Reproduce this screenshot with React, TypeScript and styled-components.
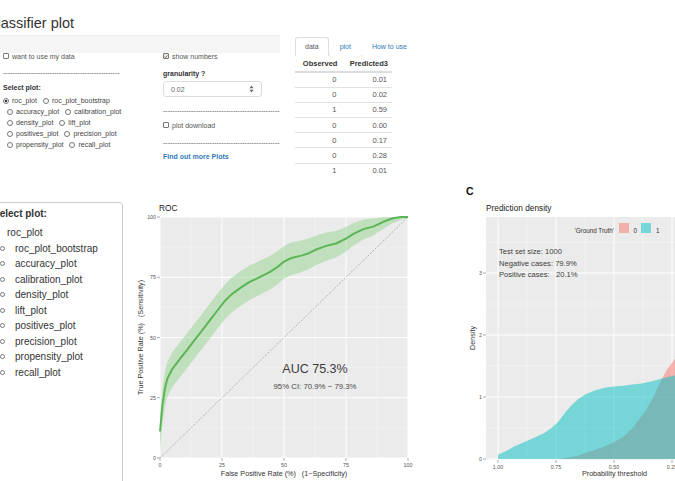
import React from "react";
import styled, { createGlobalStyle } from "styled-components";

const GlobalStyle = createGlobalStyle`
  html, body {
    margin: 0;
    padding: 0;
    background: #fff;
  }
  body {
    width: 675px;
    height: 481px;
    overflow: hidden;
    font-family: "Liberation Sans", Arial, Helvetica, sans-serif;
    color: #333;
  }
`;

// ---------- data ----------
const PLOT_OPTIONS = [
  ["roc_plot", "roc_plot_bootstrap"],
  ["accuracy_plot", "calibration_plot"],
  ["density_plot", "lift_plot"],
  ["positives_plot", "precision_plot"],
  ["propensity_plot", "recall_plot"],
];

const BIG_OPTIONS = [
  "roc_plot_bootstrap",
  "accuracy_plot",
  "calibration_plot",
  "density_plot",
  "lift_plot",
  "positives_plot",
  "precision_plot",
  "propensity_plot",
  "recall_plot",
];

const TABLE_ROWS: [string, string][] = [
  ["0", "0.01"],
  ["0", "0.02"],
  ["1", "0.59"],
  ["0", "0.00"],
  ["0", "0.17"],
  ["0", "0.28"],
  ["1", "0.01"],
];

const DASHES = "-".repeat(50);

const ROC_POINTS: [number, number][] = [
  [0, 11], [1, 22], [2, 29], [3, 33], [5, 37], [8, 41], [11, 45], [14, 49],
  [17, 53], [20, 57], [23, 61], [26, 65], [29, 68], [33, 71], [36, 73],
  [40, 75], [44, 77], [47, 79], [50, 81.5], [53, 83], [57, 84], [60, 85],
  [63, 86.5], [67, 88], [71, 89], [75, 91], [78, 93], [82, 95], [86, 96],
  [90, 98], [94, 99.5], [97, 100], [100, 100],
];

const TEAL_DENSITY: [number, number][] = [
  [1.0, 0.07], [0.97, 0.12], [0.93, 0.2], [0.88, 0.28], [0.84, 0.35],
  [0.8, 0.42], [0.77, 0.5], [0.74, 0.6], [0.71, 0.75], [0.68, 0.88],
  [0.65, 0.98], [0.62, 1.05], [0.58, 1.11], [0.54, 1.15], [0.5, 1.17],
  [0.46, 1.18], [0.42, 1.2], [0.38, 1.22], [0.34, 1.25], [0.3, 1.29],
  [0.26, 1.33], [0.22, 1.36],
];

const PINK_DENSITY: [number, number][] = [
  [0.74, 0], [0.7, 0.02], [0.66, 0.05], [0.62, 0.1], [0.58, 0.15],
  [0.54, 0.2], [0.5, 0.27], [0.46, 0.36], [0.42, 0.5], [0.39, 0.65],
  [0.36, 0.8], [0.33, 1.0], [0.3, 1.25], [0.27, 1.45], [0.24, 1.6],
  [0.22, 1.7],
];

// ---------- small widgets ----------
const CheckBox = ({ checked }: { checked?: boolean }) => (
  <Box $checked={checked}>
    {checked && (
      <svg width="5" height="5" viewBox="0 0 10 10">
        <path d="M1.5 5.2 L4 7.8 L8.8 2" fill="none" stroke="#555" strokeWidth="1.8" />
      </svg>
    )}
  </Box>
);

const Spinner = () => (
  <svg width="5" height="8" viewBox="0 0 5 8">
    <path d="M2.5 0.5 L4.5 3.2 L0.5 3.2 Z" fill="#666" />
    <path d="M2.5 7.5 L4.5 4.8 L0.5 4.8 Z" fill="#666" />
  </svg>
);

// ---------- charts ----------
const RocChart = () => {
  const L = 32;
  const T = 32;
  const W = 248;
  const H = 241;
  const sx = (v: number) => L + (v * W) / 100;
  const sy = (v: number) => T + H - (v * H) / 100;
  const spread = (f: number) => 6.5 * (1 - Math.pow(f / 100, 4)) + 0.4;

  const line = ROC_POINTS.map(
    ([f, t], i) => `${i ? "L" : "M"}${sx(f).toFixed(1)},${sy(t).toFixed(1)}`
  ).join(" ");
  const upper = ROC_POINTS.map(([f, t]) => `${sx(f).toFixed(1)},${sy(Math.min(100, t + spread(f))).toFixed(1)}`);
  const lower = [...ROC_POINTS]
    .reverse()
    .map(([f, t]) => `${sx(f).toFixed(1)},${sy(Math.max(0, t - spread(f) * 1.1)).toFixed(1)}`);
  const band = `M${upper.join(" L")} L${lower.join(" L")} Z`;

  const majors = [0, 25, 50, 75, 100];
  const minors = [12.5, 37.5, 62.5, 87.5];

  return (
    <ChartSvg width="292" height="296" viewBox="0 0 292 296">
      <PlotTitle x="31" y="26">ROC</PlotTitle>
      <rect x={L} y={T} width={W} height={H} fill="#ebebeb" />
      {minors.map((m) => (
        <g key={m}>
          <line x1={sx(m)} x2={sx(m)} y1={T} y2={T + H} stroke="#f4f4f4" strokeWidth="0.5" />
          <line x1={L} x2={L + W} y1={sy(m)} y2={sy(m)} stroke="#f4f4f4" strokeWidth="0.5" />
        </g>
      ))}
      {majors.map((m) => (
        <g key={m}>
          <line x1={sx(m)} x2={sx(m)} y1={T} y2={T + H} stroke="#fff" strokeWidth="1" />
          <line x1={L} x2={L + W} y1={sy(m)} y2={sy(m)} stroke="#fff" strokeWidth="1" />
          <line x1={L - 3} x2={L} y1={sy(m)} y2={sy(m)} stroke="#555" strokeWidth="0.5" />
          <line x1={sx(m)} x2={sx(m)} y1={T + H} y2={T + H + 3} stroke="#555" strokeWidth="0.5" />
          <TickLabel x={L - 4} y={sy(m) + 2} textAnchor="end">{m}</TickLabel>
          <TickLabel x={sx(m)} y={T + H + 8.5} textAnchor="middle">{m}</TickLabel>
        </g>
      ))}
      <path d={band} fill="#86d07f" fillOpacity="0.42" strokeLinejoin="round" />
      <line x1={L} y1={T + H} x2={L + W} y2={T} stroke="#444" strokeWidth="0.6" strokeDasharray="0.8 1.6" />
      <path d={line} fill="none" stroke="#5cb556" strokeWidth="2" strokeLinejoin="round" />
      <AucText x="187" y="188" textAnchor="middle">AUC 75.3%</AucText>
      <CiText x="187" y="204" textAnchor="middle">95% CI: 70.9% − 79.3%</CiText>
      <AxisTitle x={L + W / 2} y="291" textAnchor="middle">
        False Positive Rate (%)   (1−Specificity)
      </AxisTitle>
      <AxisTitle
        x="0"
        y="0"
        textAnchor="middle"
        transform={`translate(15 ${T + H / 2}) rotate(-90)`}
      >
        True Positive Rate (%)   (Sensitivity)
      </AxisTitle>
    </ChartSvg>
  );
};

const DensityChart = () => {
  const L = 46;
  const T = 32;
  const B = 274;
  const sx = (p: number) => 58 + (1 - p) * 232;
  const sy = (d: number) => B - d * 62;
  const area = (pts: [number, number][]) =>
    `M${sx(pts[0][0]).toFixed(1)},${B} ` +
    pts.map(([p, d]) => `L${sx(p).toFixed(1)},${sy(d).toFixed(1)}`).join(" ") +
    ` L${sx(pts[pts.length - 1][0]).toFixed(1)},${B} Z`;

  const xMajor: [number, string][] = [[1, "1.00"], [0.75, "0.75"], [0.5, "0.50"], [0.25, "0.25"]];
  const xMinor = [0.875, 0.625, 0.375];
  const yMajor = [0, 1, 2, 3];
  const yMinor = [0.5, 1.5, 2.5, 3.5];

  return (
    <ChartSvg width="235" height="296" viewBox="0 0 235 296">
      <FigureLetter x="26" y="9.5">C</FigureLetter>
      <PlotTitle x="46" y="26">Prediction density</PlotTitle>
      <rect x={L} y={T} width={235 - L} height={B - T + 1} fill="#ebebeb" />
      {xMinor.map((p) => (
        <line key={p} x1={sx(p)} x2={sx(p)} y1={T} y2={B + 1} stroke="#f4f4f4" strokeWidth="0.5" />
      ))}
      {yMinor.map((d) => (
        <line key={d} x1={L} x2={235} y1={sy(d)} y2={sy(d)} stroke="#f4f4f4" strokeWidth="0.5" />
      ))}
      {xMajor.map(([p, label]) => (
        <g key={label}>
          <line x1={sx(p)} x2={sx(p)} y1={T} y2={B + 1} stroke="#fff" strokeWidth="1" />
          <line x1={sx(p)} x2={sx(p)} y1={B + 1} y2={B + 4} stroke="#555" strokeWidth="0.5" />
          <TickLabel x={sx(p)} y={B + 9.5} textAnchor="middle">{label}</TickLabel>
        </g>
      ))}
      {yMajor.map((d) => (
        <g key={d}>
          <line x1={L} x2={235} y1={sy(d)} y2={sy(d)} stroke="#fff" strokeWidth="1" />
          <line x1={L - 3} x2={L} y1={sy(d)} y2={sy(d)} stroke="#555" strokeWidth="0.5" />
          <TickLabel x={L - 4} y={sy(d) + 2} textAnchor="end">{d}</TickLabel>
        </g>
      ))}
      <path d={area(PINK_DENSITY)} fill="#f8766d" fillOpacity="0.5" />
      <path d={area(TEAL_DENSITY)} fill="#00bfc4" fillOpacity="0.5" />

      <LegendText x="174" y="48" textAnchor="end">'Ground Truth'</LegendText>
      <rect x="179" y="38" width="10" height="10" fill="#f8766d" fillOpacity="0.5" />
      <LegendText x="193.5" y="48">0</LegendText>
      <rect x="201" y="38" width="10" height="10" fill="#00bfc4" fillOpacity="0.5" />
      <LegendText x="216" y="48">1</LegendText>

      <NoteText x="59" y="69">Test set size: 1000</NoteText>
      <NoteText x="59" y="80.5">Negative cases: 79.9%</NoteText>
      <NoteText x="59" y="92">Positive cases:   20.1%</NoteText>

      <AxisTitle x="174.5" y="291" textAnchor="middle">Probability threshold</AxisTitle>
      <AxisTitle x="0" y="0" textAnchor="middle" transform={`translate(35 153) rotate(-90)`}>
        Density
      </AxisTitle>
    </ChartSvg>
  );
};

// ---------- page ----------
const App = () => {
  return (
    <Page>
      <GlobalStyle />
      <TopSection>
        <ShinyPane>
          <Title>Classifier plot</Title>
          <Well />
          <Columns>
            <Column>
              <CheckRow>
                <CheckBox />
                want to use my data
              </CheckRow>
              <Dashes $top={9}>{DASHES}</Dashes>
              <FieldLabel $top={7}>Select plot:</FieldLabel>
              <RadioList>
                {PLOT_OPTIONS.map((row, i) => (
                  <RadioRow key={i} $indent={i === 0 ? 0 : 4}>
                    {row.map((name, j) => (
                      <RadioItem key={name}>
                        <Radio $checked={i === 0 && j === 0} />
                        {name}
                      </RadioItem>
                    ))}
                  </RadioRow>
                ))}
              </RadioList>
            </Column>
            <Column>
              <CheckRow>
                <CheckBox checked />
                show numbers
              </CheckRow>
              <FieldLabel $top={10}>granularity ?</FieldLabel>
              <NumberInput>
                0.02
                <Spinner />
              </NumberInput>
              <Dashes $top={10}>{DASHES}</Dashes>
              <CheckRow $top={6}>
                <CheckBox />
                plot download
              </CheckRow>
              <Dashes $top={10}>{DASHES}</Dashes>
              <MoreLink $top={6}>Find out more Plots</MoreLink>
            </Column>
          </Columns>
        </ShinyPane>

        <TablePane>
          <Tabs>
            <Tab $active>data</Tab>
            <Tab>plot</Tab>
            <Tab>How to use</Tab>
          </Tabs>
          <DataTable>
            <thead>
              <tr>
                <HeadCell>Observed</HeadCell>
                <HeadCell>Predicted3</HeadCell>
              </tr>
            </thead>
            <tbody>
              {TABLE_ROWS.map(([obs, pred], i) => (
                <tr key={i}>
                  <Cell>{obs}</Cell>
                  <Cell>{pred}</Cell>
                </tr>
              ))}
            </tbody>
          </DataTable>
        </TablePane>
      </TopSection>

      <BottomSection>
        <SelectPanel>
          <PanelHeading>Select plot:</PanelHeading>
          <OptionRow $plain>roc_plot</OptionRow>
          {BIG_OPTIONS.map((name) => (
            <OptionRow key={name}>
              <BigRadio />
              {name}
            </OptionRow>
          ))}
        </SelectPanel>
        <RocWrap>
          <RocChart />
        </RocWrap>
        <DensityWrap>
          <DensityChart />
        </DensityWrap>
      </BottomSection>
    </Page>
  );
};

const Page = styled.div`
  width: 675px;
  height: 481px;
  overflow: hidden;
  display: flex;
  flex-direction: column;
`;

const TopSection = styled.section`
  display: flex;
  height: 185px;
  flex-shrink: 0;
`;

const ShinyPane = styled.div`
  width: 295px;
  display: flex;
  flex-direction: column;
`;

const Title = styled.h2`
  margin: 0 0 4px -13px;
  padding-top: 15px;
  font-size: 14.5px;
  font-weight: 400;
  line-height: 16px;
  color: #333;
  white-space: nowrap;
`;

const Well = styled.div`
  width: 280px;
  height: 17px;
  background: #f5f5f5;
  border-top: 1px solid #ececec;
`;

const Columns = styled.div`
  display: grid;
  grid-template-columns: 160px 132px;
  padding-left: 3px;
`;

const Column = styled.div`
  display: flex;
  flex-direction: column;
`;

const CheckRow = styled.label<{ $top?: number }>`
  display: flex;
  align-items: center;
  gap: 3px;
  height: 8px;
  margin-top: ${(p) => (p.$top ?? -1)}px;
  font-size: 7px;
  color: #555;
  white-space: nowrap;
`;

const Box = styled.span<{ $checked?: boolean }>`
  box-sizing: border-box;
  width: 6px;
  height: 6px;
  border: 1px solid #777;
  border-radius: 1px;
  background: ${(p) => (p.$checked ? "#eaeaea" : "#fff")};
  display: inline-flex;
  align-items: center;
  justify-content: center;
  flex-shrink: 0;
`;

const Dashes = styled.div<{ $top: number }>`
  height: 8px;
  margin-top: ${(p) => p.$top}px;
  white-space: nowrap;
  font-size: 7px;
  line-height: 8px;
  color: #555;
`;

const FieldLabel = styled.div<{ $top: number }>`
  height: 8px;
  margin-top: ${(p) => p.$top}px;
  font-size: 7px;
  line-height: 8px;
  font-weight: 700;
  color: #333;
`;

const RadioList = styled.div`
  margin-top: 3px;
  display: flex;
  flex-direction: column;
`;

const RadioRow = styled.div<{ $indent: number }>`
  display: flex;
  align-items: center;
  height: 11px;
  padding-left: ${(p) => p.$indent}px;
  font-size: 7px;
  color: #444;
  white-space: nowrap;
`;

const RadioItem = styled.label`
  display: flex;
  align-items: center;
  gap: 3px;
  margin-right: 6px;
`;

const Radio = styled.span<{ $checked?: boolean }>`
  box-sizing: border-box;
  width: 6px;
  height: 6px;
  border-radius: 50%;
  border: 1px solid #777;
  background: ${(p) => (p.$checked ? "radial-gradient(circle, #333 0 1.3px, #fff 1.6px)" : "#fff")};
  flex-shrink: 0;
`;

const NumberInput = styled.div`
  box-sizing: border-box;
  width: 99px;
  height: 16px;
  margin-top: 3px;
  padding: 0 7px;
  display: flex;
  align-items: center;
  justify-content: space-between;
  border: 1px solid #ddd;
  border-radius: 3px;
  font-size: 7px;
  color: #666;
`;

const MoreLink = styled.a<{ $top: number }>`
  display: block;
  height: 8px;
  margin-top: ${(p) => p.$top}px;
  font-size: 7px;
  line-height: 8px;
  font-weight: 700;
  color: #337ab7;
  white-space: nowrap;
`;

const TablePane = styled.div`
  display: flex;
  flex-direction: column;
  padding-top: 37px;
`;

const Tabs = styled.div`
  display: flex;
  width: 117px;
  height: 19px;
  box-sizing: border-box;
  border-bottom: 1px solid #ddd;
`;

const Tab = styled.div<{ $active?: boolean }>`
  box-sizing: border-box;
  height: 19px;
  padding: 0 9px;
  margin-right: 1px;
  display: flex;
  align-items: center;
  font-size: 7px;
  white-space: nowrap;
  color: ${(p) => (p.$active ? "#555" : "#337ab7")};
  background: #fff;
  border: 1px solid ${(p) => (p.$active ? "#ddd" : "transparent")};
  border-bottom-color: ${(p) => (p.$active ? "#fff" : "transparent")};
  border-radius: 3px 3px 0 0;
`;

const DataTable = styled.table`
  width: 97px;
  border-collapse: collapse;
  font-size: 7.5px;
`;

const HeadCell = styled.th`
  height: 15px;
  padding: 0 4px;
  text-align: right;
  font-weight: 700;
  color: #333;
  border-bottom: 2px solid #ddd;
  white-space: nowrap;
`;

const Cell = styled.td`
  box-sizing: border-box;
  height: 15.2px;
  padding: 0 5px;
  text-align: right;
  color: #555;
  border-top: 1px solid #e2e2e2;
`;

const BottomSection = styled.section`
  display: flex;
  height: 296px;
  flex-shrink: 0;
`;

const SelectPanel = styled.div`
  box-sizing: border-box;
  width: 137px;
  height: 300px;
  margin: 17px 0 0 -14px;
  padding: 5px 0 0 6px;
  border: 1px solid #ccc;
  border-radius: 4px;
  flex-shrink: 0;
  font-size: 10px;
  color: #333;
`;

const PanelHeading = styled.div`
  height: 12px;
  line-height: 12px;
  font-weight: 700;
  margin-bottom: 5px;
  white-space: nowrap;
`;

const OptionRow = styled.label<{ $plain?: boolean }>`
  display: flex;
  align-items: center;
  gap: 10px;
  height: 15.5px;
  padding-left: ${(p) => (p.$plain ? 14 : 7)}px;
  white-space: nowrap;
`;

const BigRadio = styled.span`
  box-sizing: border-box;
  width: 5px;
  height: 5px;
  border-radius: 50%;
  border: 1px solid #777;
  flex-shrink: 0;
`;

const RocWrap = styled.div`
  margin-left: 5px;
  flex-shrink: 0;
`;

const DensityWrap = styled.div`
  margin-left: 20px;
  flex-shrink: 0;
`;

const ChartSvg = styled.svg`
  display: block;
  font-family: "Liberation Sans", Arial, sans-serif;
`;

const PlotTitle = styled.text`
  font-size: 8.3px;
  fill: #222;
`;

const FigureLetter = styled.text`
  font-size: 10.5px;
  font-weight: 700;
  fill: #111;
`;

const TickLabel = styled.text`
  font-size: 5.3px;
  fill: #555;
`;

const AxisTitle = styled.text`
  font-size: 7.2px;
  fill: #333;
  white-space: pre;
`;

const AucText = styled.text`
  font-size: 12.5px;
  fill: #3c3c3c;
`;

const CiText = styled.text`
  font-size: 7.8px;
  fill: #4a4a4a;
`;

const LegendText = styled.text`
  font-size: 6.3px;
  fill: #333;
`;

const NoteText = styled.text`
  font-size: 7.6px;
  fill: #3c3c3c;
  white-space: pre;
`;

export default App;
